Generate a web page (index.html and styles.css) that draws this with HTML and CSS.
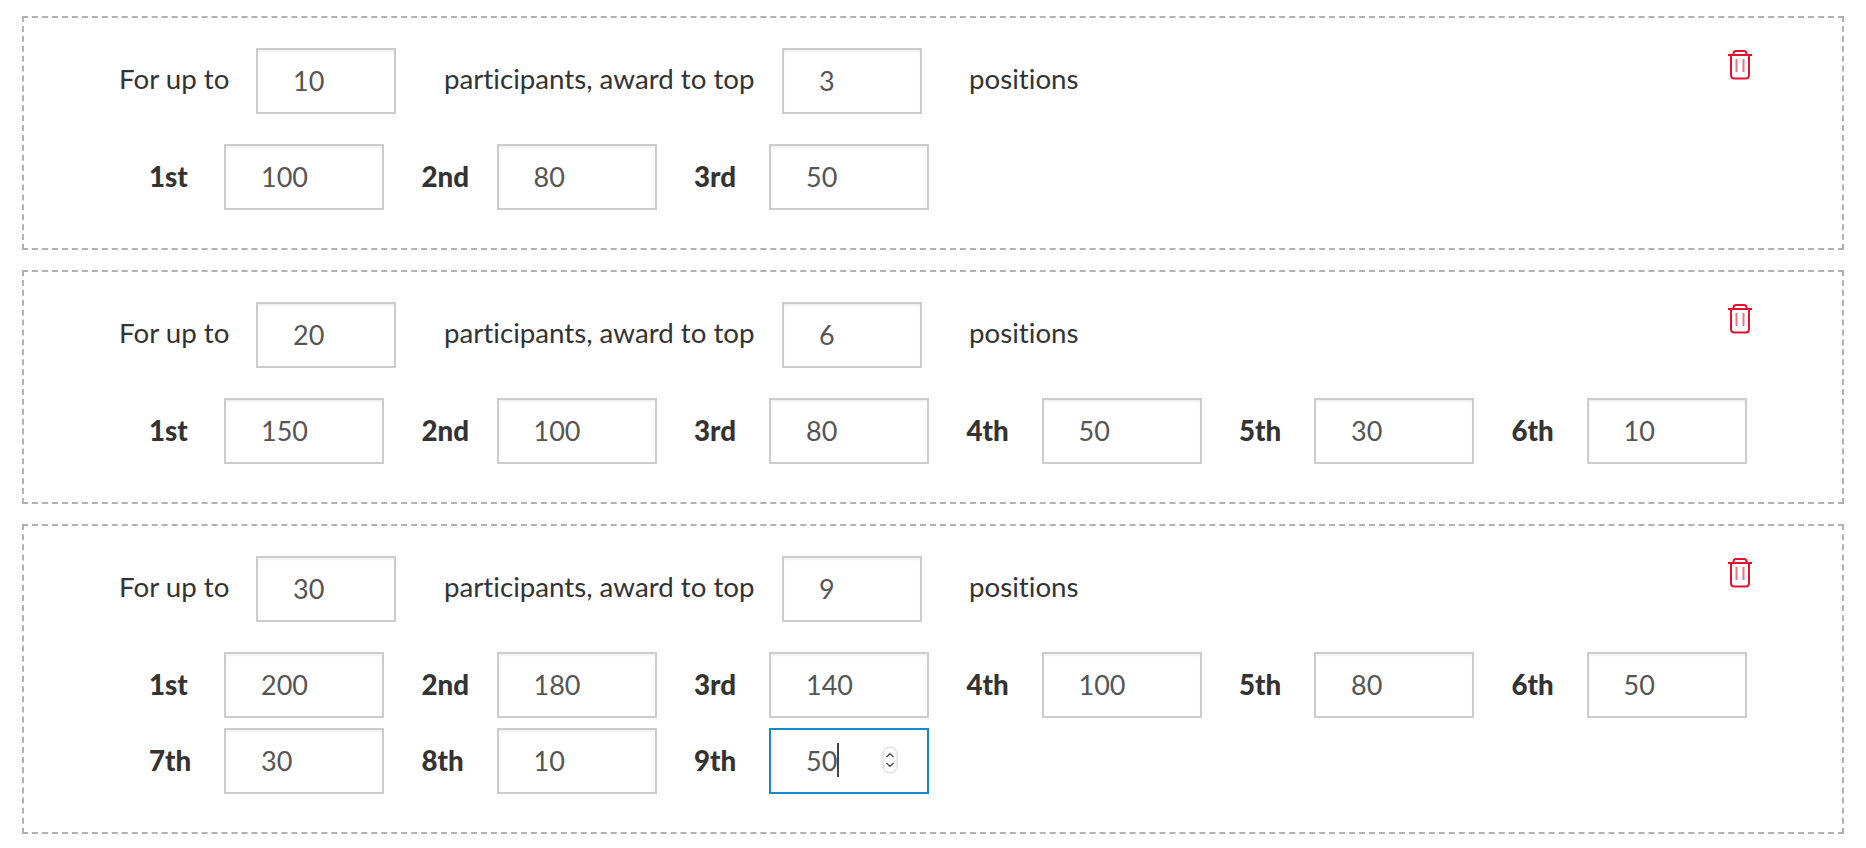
FILE: index.html
```html
<!DOCTYPE html>
<html>
	<head>
		<title>Award tiers</title>
		<link rel="stylesheet" href="styles.css">
	</head>
	<body>
		<div class="tier">
			<div class="tier-head">
				<span class="head-label">For up to</span>
				<input class="field field-small" type="text" value="10">
				<span class="head-label head-middle">participants, award to top</span>
				<input class="field field-small" type="text" value="3">
				<span class="head-label head-last">positions</span>
				<svg class="trash" viewBox="0 0 24 30"><path class="trash-line" d="M0 5h24M5.500 4.500V3.500Q5.500 1 8 1h8q2.500 0 2.500 2.500v1M3 5v20q0 3.500 3.500 3.500h11q3.500 0 3.500-3.500V5"/><path class="trash-bar" d="M8.500 9v13M15.500 9v13"/></svg>
			</div>
			<div class="places">
				<div class="place"><b>1st</b><input class="field" type="text" value="100"></div>
				<div class="place"><b>2nd</b><input class="field" type="text" value="80"></div>
				<div class="place"><b>3rd</b><input class="field" type="text" value="50"></div>
			</div>
		</div>
		<div class="tier">
			<div class="tier-head">
				<span class="head-label">For up to</span>
				<input class="field field-small" type="text" value="20">
				<span class="head-label head-middle">participants, award to top</span>
				<input class="field field-small" type="text" value="6">
				<span class="head-label head-last">positions</span>
				<svg class="trash" viewBox="0 0 24 30"><path class="trash-line" d="M0 5h24M5.500 4.500V3.500Q5.500 1 8 1h8q2.500 0 2.500 2.500v1M3 5v20q0 3.500 3.500 3.500h11q3.500 0 3.500-3.500V5"/><path class="trash-bar" d="M8.500 9v13M15.500 9v13"/></svg>
			</div>
			<div class="places">
				<div class="place"><b>1st</b><input class="field" type="text" value="150"></div>
				<div class="place"><b>2nd</b><input class="field" type="text" value="100"></div>
				<div class="place"><b>3rd</b><input class="field" type="text" value="80"></div>
				<div class="place"><b>4th</b><input class="field" type="text" value="50"></div>
				<div class="place"><b>5th</b><input class="field" type="text" value="30"></div>
				<div class="place"><b>6th</b><input class="field" type="text" value="10"></div>
			</div>
		</div>
		<div class="tier">
			<div class="tier-head">
				<span class="head-label">For up to</span>
				<input class="field field-small" type="text" value="30">
				<span class="head-label head-middle">participants, award to top</span>
				<input class="field field-small" type="text" value="9">
				<span class="head-label head-last">positions</span>
				<svg class="trash" viewBox="0 0 24 30"><path class="trash-line" d="M0 5h24M5.500 4.500V3.500Q5.500 1 8 1h8q2.500 0 2.500 2.500v1M3 5v20q0 3.500 3.500 3.500h11q3.500 0 3.500-3.500V5"/><path class="trash-bar" d="M8.500 9v13M15.500 9v13"/></svg>
			</div>
			<div class="places">
				<div class="place"><b>1st</b><input class="field" type="text" value="200"></div>
				<div class="place"><b>2nd</b><input class="field" type="text" value="180"></div>
				<div class="place"><b>3rd</b><input class="field" type="text" value="140"></div>
				<div class="place"><b>4th</b><input class="field" type="text" value="100"></div>
				<div class="place"><b>5th</b><input class="field" type="text" value="80"></div>
				<div class="place"><b>6th</b><input class="field" type="text" value="50"></div>
				<div class="place"><b>7th</b><input class="field" type="text" value="30"></div>
				<div class="place"><b>8th</b><input class="field" type="text" value="10"></div>
				<div class="place"><b>9th</b>
					<div class="field field-focus">
						<span>50</span><i class="caret"></i>
						<svg class="spinner" viewBox="0 0 16 28"><rect class="spinner-box" x="1" y="1" width="14" height="26" rx="7"/><path class="spinner-arrow" d="M4.500 11 8 7.500 11.500 11M4.500 17 8 20.500 11.500 17"/></svg>
					</div>
				</div>
			</div>
		</div>
	</body>
</html>
```

FILE: styles.css
```css
* {box-sizing: border-box;}
body {
	margin: 0;
	padding: 16px 22px 0 22px;
	background: #fff;
	color: #333;
	font-family: "Lato", sans-serif;
	font-size: 27.7px;
	font-variant-ligatures: none;
}
.tier {
	border: 2px dashed #b2b2b2;
	padding: 30px 0 38px 95px;
	margin-bottom: 20px;
}
.tier-head {
	display: flex;
	align-items: center;
	margin-bottom: 30px;
}
.head-label {width: 137px; padding-bottom: 5px;}
.head-middle {width: 338px; margin-left: 48px;}
.head-last {width: auto; margin-left: 47px;}
.trash {
	width: 24px;
	height: 30px;
	margin-left: auto;
	margin-right: 90px;
	margin-top: 2px;
	align-self: flex-start;
	fill: none;
	stroke: #e8112d;
}
.trash-line {stroke-width: 2;}
.trash-bar {stroke-width: 2; opacity: .6;}
.places {
	display: flex;
	flex-wrap: wrap;
	row-gap: 10px;
	padding-left: 30px;
}
.place {
	width: 272.5px;
	display: flex;
	align-items: center;
}
.place b {
	width: 75px;
	padding-bottom: 2px;
	font-weight: 900;
}
.field {
	width: 160px;
	height: 66px;
	border: 2px solid #ccc;
	padding: 0 0 2px 35px;
	background: #fff;
	box-shadow: inset 0 2px 2px rgba(0,0,0,.06);
	color: #555;
	font-family: inherit;
	font-size: 27px;
	font-variant-ligatures: none;
	border-radius: 0;
	outline: none;
}
.field-small {width: 140px;}
.field-focus {
	display: flex;
	align-items: center;
	position: relative;
	border-color: #1588c9;
	box-shadow: none;
}
.caret {
	width: 2px;
	height: 34px;
	background: #444;
}
.spinner {
	position: absolute;
	right: 29px;
	top: 16px;
	width: 16px;
	height: 28px;
	fill: #fff;
}
.spinner-box {stroke: #d5d5d5; stroke-width: 1;}
.spinner-arrow {fill: none; stroke: #444; stroke-width: 1.200;}
```
